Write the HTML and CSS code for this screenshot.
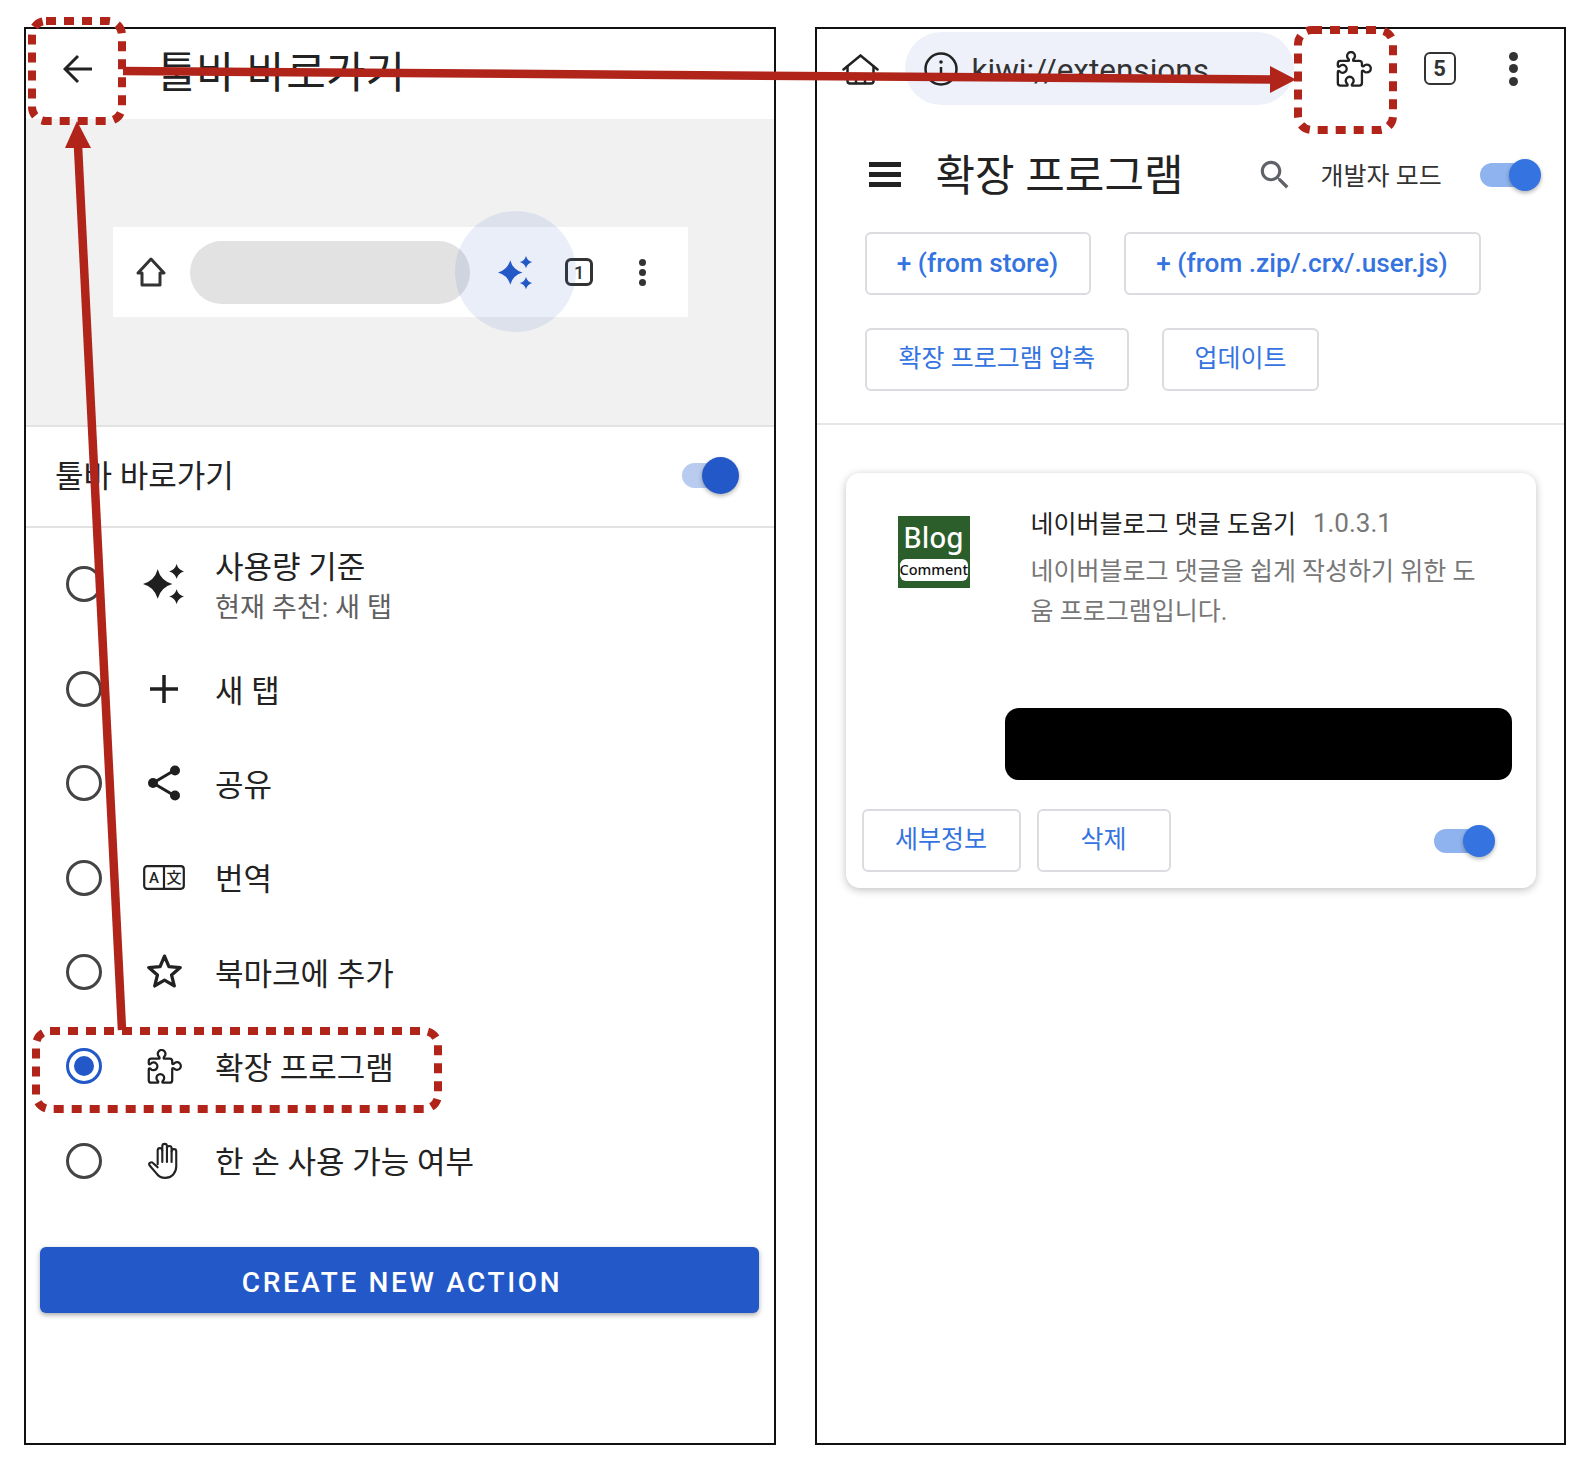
FILE: index.html
```html
<!DOCTYPE html>
<html lang="ko">
<head>
    <meta charset="utf-8">
    <title>툴바 바로가기</title>
    <link rel="stylesheet" href="styles.css">
</head>
<body>
    <svg class="defs" width="0" height="0">
        <symbol id="puzzle" viewBox="0 0 108 109">
            <path fill="none" stroke="currentColor" stroke-width="7" stroke-linejoin="round" d="M5 38a8 8 0 0 1 8-8H36c4 0 3-4 1-6a12 12 0 1 1 16 0c-2 2-3 6 1 6H70a8 8 0 0 1 8 8V44c0 4 4 3 6 1a12 12 0 1 1 0 16c-2-2-6-3-6 1V97a8 8 0 0 1-8 8H50c-4 0-3-4-1-6a12 12 0 1 0-16 0c2 2 3 6-1 6H13a8 8 0 0 1-8-8V63c0-4 4-3 6-1a12 12 0 1 0 0-16c-2 2-6 3-6-1Z"/>
        </symbol>
        <symbol id="sparkle" viewBox="0 0 40 40">
            <path fill="currentColor" d="M14 6Q17 17 28 20Q17 23 14 34Q11 23 0 20Q11 17 14 6Z"/>
            <path fill="currentColor" d="M32 1Q33.500 6.500 39 8Q33.500 9.500 32 15Q30.500 9.500 25 8Q30.500 6.500 32 1Z"/>
            <path fill="currentColor" d="M32 25Q33.500 30.500 39 32Q33.500 33.500 32 39Q30.500 33.500 25 32Q30.500 30.500 32 25Z"/>
        </symbol>
    </svg>

    <div class="page">
        <!-- left phone: toolbar shortcut settings -->
        <section class="phone">
            <header class="appbar">
                <svg class="back-icon" viewBox="0 0 30 30"><path d="M29 15H2M15 2L2 15l13 13"/></svg>
                <h1 class="appbar-title">툴바 바로가기</h1>
            </header>

            <div class="preview">
                <div class="preview-bar">
                    <svg class="preview-home" viewBox="0 0 30 30"><path d="M15 2L28 16H24V28H6V16H2Z"/></svg>
                    <div class="preview-pill"></div>
                    <svg class="preview-sparkle"><use href="#sparkle"/></svg>
                    <div class="tab-count preview-tabs">1</div>
                    <div class="dots preview-dots"><i></i><i></i><i></i></div>
                    <div class="preview-glow"></div>
                </div>
            </div>

            <div class="setting-row">
                <span class="setting-label">툴바 바로가기</span>
                <div class="toggle toggle-dark"><div class="toggle-track"></div><div class="toggle-thumb"></div></div>
            </div>

            <div class="options">
                <div class="option option-first">
                    <div class="radio"></div>
                    <div class="option-icon"><svg class="icon-sparkle"><use href="#sparkle"/></svg></div>
                    <div class="option-text">
                        <div class="option-label">사용량 기준</div>
                        <div class="option-sub">현재 추천: 새 탭</div>
                    </div>
                </div>
                <div class="option">
                    <div class="radio"></div>
                    <div class="option-icon">
                        <svg class="icon-plus" viewBox="0 0 28 28"><path d="M14 0V28M0 14H28"/></svg>
                    </div>
                    <div class="option-label">새 탭</div>
                </div>
                <div class="option">
                    <div class="radio"></div>
                    <div class="option-icon">
                        <svg class="icon-share" viewBox="0 0 32 36">
                            <path d="M5 18L27 5M5 18L27 31"/>
                            <circle cx="5" cy="18" r="5"/><circle cx="27" cy="5.500" r="5"/><circle cx="27" cy="30.500" r="5"/>
                        </svg>
                    </div>
                    <div class="option-label">공유</div>
                </div>
                <div class="option">
                    <div class="radio"></div>
                    <div class="option-icon">
                        <svg class="icon-translate" viewBox="0 0 42 25">
                            <rect x="1.200" y="1.200" width="39.600" height="22.600" rx="3"/>
                            <path d="M21 1V24"/>
                            <text x="11" y="18" class="translate-a">A</text>
                            <text x="31" y="18" class="translate-b">文</text>
                        </svg>
                    </div>
                    <div class="option-label">번역</div>
                </div>
                <div class="option">
                    <div class="radio"></div>
                    <div class="option-icon">
                        <svg class="icon-star" viewBox="0 0 36 34"><path d="M18 3L22.300 13.200 33.300 14.100 24.900 21.400 27.500 32 18 26.400 8.500 32 11.100 21.400 2.700 14.100 13.700 13.200Z"/></svg>
                    </div>
                    <div class="option-label">북마크에 추가</div>
                </div>
                <div class="option">
                    <div class="radio radio-on"></div>
                    <div class="option-icon"><svg class="icon-puzzle"><use href="#puzzle"/></svg></div>
                    <div class="option-label">확장 프로그램</div>
                </div>
                <div class="option">
                    <div class="radio"></div>
                    <div class="option-icon">
                        <svg class="icon-hand" viewBox="0 0 32 36">
                            <path d="M10 21V8a2.200 2.200 0 0 1 4.400 0V4a2.200 2.200 0 0 1 4.400 0v2a2.200 2.200 0 0 1 4.400 0v3a2.200 2.200 0 0 1 4.400 0v14c0 6.500-4.500 11-10.500 11-4 0-6.500-1.500-8.500-4.500L2.200 22c-1-1.800 1.800-3.800 3.300-2.200L10 24"/>
                            <path d="M14.400 8v11M18.800 6v13M23.200 9v10"/>
                        </svg>
                    </div>
                    <div class="option-label">한 손 사용 가능 여부</div>
                </div>
            </div>

            <button class="create-btn">CREATE NEW ACTION</button>
        </section>

        <!-- right phone: kiwi extensions page -->
        <section class="phone">
            <div class="browser-bar">
                <svg class="browser-home" viewBox="0 0 37 31">
                    <path d="M1.500 15.500L18.500 1.500 35.500 15.500"/>
                    <path d="M5.500 12.500V27a2.500 2.500 0 0 0 2.500 2.500H29a2.500 2.500 0 0 0 2.500-2.500V12.500"/>
                    <path d="M14 29V21.500h9V29"/>
                </svg>
                <div class="url-pill">
                    <svg class="info-icon" viewBox="0 0 34 34">
                        <circle cx="17" cy="17" r="15.500"/>
                        <path d="M17 15V25"/>
                        <circle class="info-dot" cx="17" cy="10" r="1.800"/>
                    </svg>
                    <span class="url-text">kiwi://extensions</span>
                </div>
                <svg class="browser-puzzle"><use href="#puzzle"/></svg>
                <div class="tab-count browser-tabs">5</div>
                <div class="dots browser-dots"><i></i><i></i><i></i></div>
            </div>

            <div class="ext-header">
                <div class="hamburger"><i></i><i></i><i></i></div>
                <h1 class="ext-title">확장 프로그램</h1>
                <svg class="search-icon" viewBox="0 0 24 24"><path d="M15.500 14h-.79l-.28-.27C15.410 12.590 16 11.110 16 9.500 16 5.910 13.090 3 9.500 3S3 5.910 3 9.500 5.910 16 9.500 16c1.610 0 3.090-.59 4.230-1.570l.27.28v.79l5 4.990L20.490 19l-4.990-5zm-6 0C7.010 14 5 11.990 5 9.500S7.010 5 9.500 5 14 7.010 14 9.500 11.990 14 9.500 14z"/></svg>
                <span class="dev-label">개발자 모드</span>
                <div class="toggle toggle-light"><div class="toggle-track"></div><div class="toggle-thumb"></div></div>
            </div>

            <div class="ext-actions">
                <button class="outline-btn btn-en btn-store">+ (from store)</button>
                <button class="outline-btn btn-en btn-zip">+ (from .zip/.crx/.user.js)</button>
                <button class="outline-btn">확장 프로그램 압축</button>
                <button class="outline-btn btn-update">업데이트</button>
            </div>

            <div class="ext-card">
                <div class="ext-card-head">
                    <div class="ext-logo">
                        <div class="ext-logo-top">Blog</div>
                        <div class="ext-logo-tag">Comment</div>
                    </div>
                    <div class="ext-info">
                        <div class="ext-name-row">
                            <span class="ext-name">네이버블로그 댓글 도움기</span>
                            <span class="ext-version">1.0.3.1</span>
                        </div>
                        <p class="ext-desc">네이버블로그 댓글을 쉽게 작성하기 위한 도움 프로그램입니다.</p>
                    </div>
                </div>
                <div class="ext-redacted"></div>
                <div class="ext-card-foot">
                    <button class="outline-btn btn-details">세부정보</button>
                    <button class="outline-btn btn-remove">삭제</button>
                    <div class="toggle toggle-light toggle-card"><div class="toggle-track"></div><div class="toggle-thumb"></div></div>
                </div>
            </div>
        </section>
    </div>

    <!-- red annotations drawn over both screenshots -->
    <svg class="marks" viewBox="0 0 1582 1460">
        <rect class="mark-box" x="32" y="21" width="90" height="100" rx="14"/>
        <rect class="mark-box" x="36" y="1031" width="402" height="78" rx="14"/>
        <rect class="mark-box" x="1298" y="30" width="95" height="100" rx="14"/>
        <path class="mark-line" d="M123 71L1272 79.500"/>
        <path class="mark-line" d="M78 146L122 1030"/>
        <polygon class="mark-head" points="1296,79.500 1270,66 1270,93"/>
        <polygon class="mark-head" points="77,121 65,148 91,148"/>
    </svg>
</body>
</html>
```

FILE: styles.css
```css
* {
    box-sizing: border-box;
}

body {
    margin: 0;
    background-color: #fff;
    font-family: Roboto, "Noto Sans CJK KR", sans-serif;
    color: #222;
}

h1,
p {
    margin: 0;
    font-weight: 400;
}

button {
    font-family: inherit;
}

.defs {
    display: block;
}

.page {
    display: flex;
    gap: 39px;
    width: 1582px;
    height: 1460px;
    padding: 27px 16px 15px 24px;
}

.phone {
    width: 752px;
    border: 2px solid #111;
    background-color: #fff;
}

/* ---- left phone ---- */

.appbar {
    display: flex;
    align-items: center;
    height: 90px;
    padding-left: 37px;
}

.back-icon {
    width: 30px;
    height: 30px;
    margin-bottom: 10px;
    fill: none;
    stroke: #222;
    stroke-width: 3;
}

.appbar-title {
    margin: 0 0 3px 64px;
    font-size: 43px;
    line-height: 50px;
}

.preview {
    display: flex;
    align-items: center;
    height: 308px;
    padding-left: 87px;
    background-color: #f1f1f1;
    border-bottom: 2px solid #e2e2e2;
}

.preview-bar {
    position: relative;
    display: flex;
    align-items: center;
    width: 575px;
    height: 90px;
    padding-left: 23px;
    background-color: #fff;
}

.preview-home {
    width: 30px;
    height: 30px;
    fill: none;
    stroke: #333;
    stroke-width: 3;
    stroke-linejoin: round;
}

.preview-pill {
    width: 280px;
    height: 63px;
    margin-left: 24px;
    border-radius: 32px;
    background-color: #e2e2e2;
}

.preview-sparkle {
    width: 35px;
    height: 35px;
    margin-left: 28px;
    color: #2358c8;
}

.tab-count {
    display: flex;
    align-items: center;
    justify-content: center;
    border: 3px solid #333;
    border-radius: 6px;
    color: #333;
    font-weight: 500;
}

.preview-tabs {
    width: 28px;
    height: 28px;
    margin-left: 32px;
    font-size: 18px;
}

.dots {
    display: flex;
    flex-direction: column;
}

.dots i {
    display: block;
    border-radius: 50%;
    background-color: #333;
}

.preview-dots {
    gap: 3px;
    margin-left: 46px;
}

.preview-dots i {
    width: 7px;
    height: 7px;
}

.preview-glow {
    position: absolute;
    left: 342px;
    top: -16px;
    width: 121px;
    height: 121px;
    border-radius: 50%;
    background-color: rgba(35, 88, 200, 0.1);
}

.setting-row {
    display: flex;
    align-items: center;
    justify-content: space-between;
    height: 101px;
    padding: 0 35px 2px 29px;
    border-bottom: 2px solid #e2e2e2;
}

.setting-label {
    margin-top: 3px;
    font-size: 31px;
    line-height: 40px;
}

.toggle {
    position: relative;
    display: flex;
    align-items: center;
    flex-shrink: 0;
}

.toggle-track {
    border-radius: 13px;
}

.toggle-thumb {
    position: absolute;
    right: 0;
    top: 0;
    border-radius: 50%;
    box-shadow: 0 2px 4px rgba(0, 0, 0, 0.3);
}

.toggle-dark {
    width: 57px;
    height: 37px;
}

.toggle-dark .toggle-track {
    width: 48px;
    height: 25px;
    background-color: #b9cbee;
}

.toggle-dark .toggle-thumb {
    width: 37px;
    height: 37px;
    background-color: #2358c8;
}

.toggle-light {
    width: 61px;
    height: 32px;
}

.toggle-light .toggle-track {
    width: 50px;
    height: 24px;
    background-color: #8fb3ee;
}

.toggle-light .toggle-thumb {
    width: 32px;
    height: 32px;
    background-color: #3473e0;
}

.option {
    display: flex;
    align-items: center;
    height: 94.300px;
    padding-left: 40px;
}

.option > .option-label {
    padding-top: 5px;
}

.option-first {
    height: 114px;
}

.option-first .radio {
    margin-bottom: 2px;
}

.option-first .option-icon {
    margin-bottom: 2px;
}

.option-text {
    padding-top: 2px;
}

.radio {
    flex-shrink: 0;
    display: flex;
    align-items: center;
    justify-content: center;
    width: 36px;
    height: 36px;
    border: 3.500px solid #444;
    border-radius: 50%;
}

.radio-on {
    border-color: #2358c8;
}

.radio-on::after {
    content: "";
    width: 20px;
    height: 20px;
    border-radius: 50%;
    background-color: #2358c8;
}

.option-icon {
    display: flex;
    align-items: center;
    justify-content: center;
    width: 44px;
    height: 44px;
    margin: 0 29px 0 40px;
    color: #1f1f1f;
}

.option-label {
    font-size: 31px;
    line-height: 40px;
}

.option-sub {
    margin-top: 3px;
    font-size: 27.200px;
    line-height: 34px;
    color: #5f5f5f;
}

.icon-sparkle {
    width: 42px;
    height: 42px;
}

.icon-plus {
    width: 28px;
    height: 28px;
    stroke: #1f1f1f;
    stroke-width: 3.500;
}

.icon-share {
    width: 32px;
    height: 36px;
    fill: #1f1f1f;
    stroke: #1f1f1f;
}

.icon-share path {
    stroke-width: 3;
}

.icon-share circle {
    stroke: none;
}

.icon-translate {
    width: 42px;
    height: 25px;
    fill: none;
    stroke: #222;
    stroke-width: 2.200;
}

.translate-a,
.translate-b {
    fill: #222;
    stroke: none;
    font-size: 15px;
    font-weight: 500;
    text-anchor: middle;
}

.icon-star {
    width: 37px;
    height: 35px;
    margin-bottom: 3px;
    fill: none;
    stroke: #222;
    stroke-width: 3.200;
    stroke-linejoin: round;
}

.icon-puzzle {
    width: 35px;
    height: 35px;
}

.icon-hand {
    width: 34px;
    height: 38px;
    fill: none;
    stroke: #222;
    stroke-width: 2;
    stroke-linejoin: round;
    stroke-linecap: round;
}

.create-btn {
    display: block;
    width: 719px;
    height: 66px;
    margin: 39px 0 0 14px;
    padding: 5px 0 0 5px;
    border: none;
    border-radius: 6px;
    background-color: #2358c8;
    color: #fff;
    font-size: 28px;
    font-weight: 500;
    letter-spacing: 2.600px;
    box-shadow: 0 2px 5px rgba(0, 0, 0, 0.35);
}

/* ---- right phone ---- */

.browser-bar {
    display: flex;
    align-items: center;
    height: 73px;
    margin-top: 3px;
    padding-left: 25px;
}

.browser-home {
    width: 37px;
    height: 31px;
    margin-top: 1px;
    fill: none;
    stroke: #222;
    stroke-width: 2.500;
    stroke-linecap: round;
}

.url-pill {
    display: flex;
    align-items: center;
    width: 389px;
    height: 73px;
    margin-left: 26px;
    padding-left: 19px;
    border-radius: 37px;
    background-color: #eef1fa;
}

.info-icon {
    width: 34px;
    height: 34px;
    fill: none;
    stroke: #222;
    stroke-width: 2.500;
}

.info-dot {
    fill: #222;
    stroke: none;
}

.url-text {
    margin: 3px 0 0 14px;
    font-size: 31.500px;
    color: #333;
}

.browser-puzzle {
    width: 36px;
    height: 36px;
    margin-left: 42px;
    color: #222;
}

.browser-tabs {
    width: 32px;
    height: 33px;
    margin-left: 52px;
    border-width: 2.500px;
    font-size: 22px;
    font-weight: 700;
}

.browser-dots {
    gap: 3.500px;
    margin-left: 53px;
}

.browser-dots i {
    width: 9px;
    height: 9px;
}

.ext-header {
    display: flex;
    align-items: center;
    height: 68px;
    margin-top: 35px;
    padding-left: 52px;
}

.hamburger {
    display: flex;
    flex-direction: column;
    gap: 5px;
    width: 32px;
}

.hamburger i {
    display: block;
    height: 5px;
    background-color: #222;
}

.ext-title {
    margin: 4px 0 0 35px;
    font-size: 43px;
    line-height: 50px;
}

.search-icon {
    width: 38px;
    height: 38px;
    margin: 1px 0 0 72px;
    fill: #5f6368;
}

.dev-label {
    margin: 0 0 1px 27px;
    font-size: 25px;
    color: #333;
}

.ext-header .toggle {
    margin: 2px 0 0 38px;
}

.ext-actions {
    display: flex;
    flex-wrap: wrap;
    gap: 33px 33px;
    margin-top: 24px;
    padding: 0 48px 32px;
    border-bottom: 2px solid #e6e6e6;
}

.outline-btn {
    height: 63px;
    padding: 0 32px 8px;
    border: 2px solid #dadce0;
    border-radius: 6px;
    background-color: #fff;
    color: #3473e0;
    font-size: 25px;
    white-space: nowrap;
}

.btn-en {
    padding: 0 0 2px;
    font-size: 26.200px;
    font-weight: 500;
}

.btn-store {
    width: 226px;
}

.btn-zip {
    width: 357px;
}

.btn-update {
    width: 157px;
    padding: 0 0 8px;
}

.ext-card {
    height: 415px;
    margin: 48px 28px 0 29px;
    border-radius: 14px;
    background-color: #fff;
    box-shadow: 0 2px 8px rgba(0, 0, 0, 0.25);
}

.ext-card-head {
    display: flex;
    height: 235px;
    padding: 43px 0 0 52px;
}

.ext-logo {
    flex-shrink: 0;
    display: flex;
    flex-direction: column;
    align-items: center;
    width: 72px;
    height: 72px;
    padding: 2px 2px 0;
    background-color: #2b5e2b;
    font-family: "Noto Sans", sans-serif;
}

.ext-logo-top {
    height: 41px;
    color: #fff;
    font-size: 28px;
    font-weight: 500;
    line-height: 38px;
}

.ext-logo-tag {
    width: 100%;
    height: 22px;
    border-radius: 6px;
    background-color: #fff;
    color: #111;
    font-size: 14.500px;
    font-weight: 500;
    line-height: 21px;
    text-align: center;
}

.ext-info {
    width: 462px;
    margin: -12px 0 0 61px;
}

.ext-name-row {
    display: flex;
    align-items: center;
    height: 40px;
}

.ext-name {
    margin-bottom: 4px;
    font-size: 25px;
}

.ext-version {
    margin: 0 0 2px 17px;
    font-size: 26px;
    color: #777;
}

.ext-desc {
    margin-top: 8px;
    font-size: 25px;
    line-height: 40px;
    color: #777;
}

.ext-redacted {
    width: 507px;
    height: 72px;
    margin-left: 159px;
    border-radius: 14px;
    background-color: #000;
}

.ext-card-foot {
    display: flex;
    align-items: center;
    gap: 16px;
    margin-top: 29px;
    padding-left: 16px;
}

.btn-details {
    width: 159px;
    padding: 0 0 8px;
}

.btn-remove {
    width: 134px;
    padding: 0 0 8px;
}

.ext-card-foot .toggle-card {
    margin-left: 247px;
}

/* ---- annotations ---- */

.marks {
    position: absolute;
    left: 0;
    top: 0;
    width: 1582px;
    height: 1460px;
    pointer-events: none;
}

.mark-box {
    fill: none;
    stroke: #b0241a;
    stroke-width: 8;
    stroke-dasharray: 10 8;
}

.mark-line {
    fill: none;
    stroke: #b0241a;
    stroke-width: 8.500;
}

.mark-head {
    fill: #b0241a;
}
```
